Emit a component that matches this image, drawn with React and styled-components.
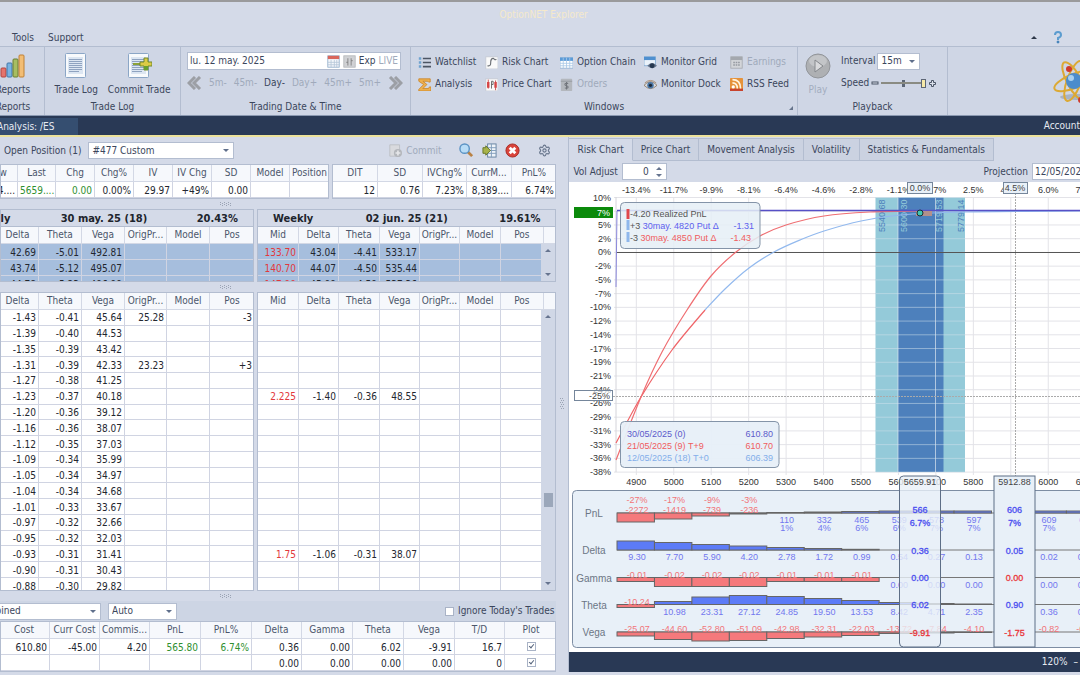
import React from "react";
import styled, { createGlobalStyle } from "styled-components";
import { Settings } from "lucide-react";

const navy = "#293955";
const line = "#b3bdd0";
const ink = "#3b465c";

const openQuotes = {
  widths: [39, 38, 39, 39, 39, 39, 39, 39, 40],
  head: ["Low", "Last", "Chg", "Chg%", "IV", "IV Chg", "SD", "Model", "Position"],
  rows: [["564....", "5659....", "0.00", "0.00%", "29.97", "+49%", "0.00", "", ""]],
  tones: { 1: "green", 2: "green" },
};

const tradeStats = {
  widths: [45, 45, 44, 45, 45],
  head: ["DIT", "SD", "IVChg%", "CurrM...", "PnL%"],
  rows: [["12", "0.76", "7.23%", "8,389....", "6.74%"]],
};

const chainHead = ["Mid", "Delta", "Theta", "Vega", "OrigPr...", "Model", "Pos"];
const mayWidths = [42, 42, 43, 43, 42, 43, 45];
const junWidths = [41, 40, 41, 40, 40, 41, 43];

const mayCalls = [
  ["", "42.69", "-5.01", "492.81", "", "", ""],
  ["", "43.74", "-5.12", "495.07", "", "", ""],
  ["", "44.78", "-5.23", "496.99", "", "", ""],
];
const junCalls = [
  ["133.70", "43.04", "-4.41", "533.17", "", "", ""],
  ["140.70", "44.07", "-4.50", "535.44", "", "", ""],
  ["147.90", "45.09", "-4.59", "537.36", "", "", ""],
];
const mayPuts = [
  ["-1.43", "-0.41", "45.64", "25.28", "-3"],
  ["-1.39", "-0.40", "44.53"],
  ["-1.35", "-0.39", "43.42"],
  ["-1.31", "-0.39", "42.33", "23.23", "+3"],
  ["-1.27", "-0.38", "41.25"],
  ["-1.23", "-0.37", "40.18"],
  ["-1.20", "-0.36", "39.12"],
  ["-1.16", "-0.36", "38.07"],
  ["-1.12", "-0.35", "37.03"],
  ["-1.09", "-0.34", "35.99"],
  ["-1.05", "-0.34", "34.97"],
  ["-1.04", "-0.34", "34.68"],
  ["-1.01", "-0.33", "33.67"],
  ["-0.97", "-0.32", "32.66"],
  ["-0.95", "-0.32", "32.03"],
  ["-0.93", "-0.31", "31.41"],
  ["-0.90", "-0.31", "30.43"],
  ["-0.88", "-0.30", "29.82"],
].map(([d, t, v, orig = "", pos = ""]) => ["", d, t, v, orig, "", pos]);
const junPuts = mayPuts.map((_, i) => {
  if (i === 5) return ["2.225", "-1.40", "-0.36", "48.55", "", "", ""];
  if (i === 15) return ["1.75", "-1.06", "-0.31", "38.07", "", "", ""];
  return ["", "", "", "", "", "", ""];
});

const totals = {
  widths: [51, 50, 50, 51, 51, 50, 51, 51, 51, 50, 53],
  head: ["Cost", "Curr Cost", "Commis...", "PnL", "PnL%", "Delta", "Gamma", "Theta", "Vega", "T/D", "Plot"],
  rows: [
    ["610.80", "-45.00", "4.20", "565.80", "6.74%", "0.36", "0.00", "6.02", "-9.91", "16.7", "check"],
    ["", "", "", "", "", "0.00", "0.00", "0.00", "0.00", "0", "check"],
  ],
  tones: { 3: "green", 4: "green" },
};

/* ---------- icons ---------- */

function Icon({ size = 13, children, label }) {
  return (
    <svg width={size} height={size} viewBox="0 0 16 16" aria-hidden={!label} aria-label={label}>
      {children}
    </svg>
  );
}

const icons = {
  watchlist: (
    <>
      <path d="M1 3h3M1 8h3M1 13h3" stroke="#6fa3cf" strokeWidth="3" />
      <path d="M6 3h10M6 8h10M6 13h10" stroke="#4c5564" strokeWidth="2" />
    </>
  ),
  analysis: (
    <path d="M1 1h14v4h-2l-1-1H6l5 4-5 5h7l1-2h2v5H1v-2l6-6-6-4z" fill="#eeb04f" stroke="#c98426" />
  ),
  risk: (
    <>
      <rect x="1" y="1" width="15" height="15" fill="#fafafa" stroke="#c3c8d2" />
      <path d="M3 12c4 1 4-2 4-4s1-5 3-5 1 3 4 1" fill="none" stroke="#6b6f75" strokeWidth="1.4" />
    </>
  ),
  price: (
    <>
      <rect x="1" y="1" width="15" height="15" fill="#fafafa" stroke="#c3c8d2" />
      <path d="M4 2v11M13 3v12" stroke="#c23434" />
      <path d="M4 5v7M13 5v7" stroke="#d64545" strokeWidth="3" />
      <path d="M8 13V4h2v4H8" fill="none" stroke="#555" />
    </>
  ),
  chain: (
    <>
      <rect x="0" y="2" width="16" height="13" fill="#fff" stroke="#8fb0d2" />
      <rect x="0" y="2" width="16" height="4" fill="#5b9bd8" />
      <path d="M4 2v13M8 2v13M12 2v13M0 9h16M0 12h16" stroke="#a9c8e6" />
    </>
  ),
  orders: (
    <>
      <rect x="1" y="1" width="14" height="15" rx="1" fill="#b3b7bd" />
      <path d="M1 4h14" stroke="#93979e" />
      <path d="M10 7c-1-1-4-1-4 1s4 1 4 3-3 2-4 1M8 5v9" fill="none" stroke="#71757c" strokeWidth="1.3" />
    </>
  ),
  commit: (
    <>
      <path d="M1 1h12v14H1z" fill="#d9dade" stroke="#b9bcc2" />
      <circle cx="11" cy="11" r="5" fill="#b4b7bc" />
      <path d="M11 8v6M8 11h6" stroke="#e6e7ea" strokeWidth="2" />
    </>
  ),
  grid: (
    <>
      <rect x="0" y="1" width="14" height="11" fill="#eaf2fa" stroke="#7fa9d1" />
      <rect x="0" y="1" width="14" height="4" fill="#4f90d0" />
      <path d="M4 12q6-7 12 0-6 6-12 0z" fill="#64748b" />
      <circle cx="10" cy="12" r="3" fill="#26384f" />
    </>
  ),
  dock: (
    <>
      <path d="M0 9q8-9 16 0-8 8-16 0z" fill="#d9dde3" stroke="#8b7358" />
      <circle cx="8" cy="9" r="4" fill="#4a76a5" />
      <circle cx="8" cy="9" r="2" fill="#1d2937" />
      <path d="M1 6q7-6 14 0" fill="none" stroke="#a48462" />
    </>
  ),
  earnings: (
    <>
      <rect x="1" y="1" width="14" height="14" fill="#d3d5d9" stroke="#a4a8ae" />
      <rect x="1" y="1" width="14" height="4" fill="#a4a8ae" />
      <path d="M4 8h8M4 11h8" stroke="#9498a0" strokeWidth="2" strokeDasharray="2 1" />
    </>
  ),
  rss: (
    <>
      <rect x="0" y="0" width="16" height="16" rx="1" fill="#e5923a" />
      <path d="M0 13h16v3H0z" fill="#c8432d" />
      <circle cx="4" cy="11" r="2" fill="#fff" />
      <path d="M3 6q6 0 6 7M3 2q10 0 10 11" fill="none" stroke="#fff3df" strokeWidth="2" />
    </>
  ),
};

const windowItems = [
  ["watchlist", "Watchlist"],
  ["risk", "Risk Chart"],
  ["chain", "Option Chain"],
  ["grid", "Monitor Grid"],
  ["earnings", "Earnings", true],
  ["analysis", "Analysis"],
  ["price", "Price Chart"],
  ["orders", "Orders", true],
  ["dock", "Monitor Dock"],
  ["rss", "RSS Feed"],
];

function BarsIcon() {
  return (
    <svg width="26" height="26" viewBox="0 0 26 26" aria-hidden="true">
      <rect x="1" y="15" width="5" height="9" rx="1" fill="#e4746d" stroke="#b34540" />
      <rect x="7" y="10" width="5" height="14" rx="1" fill="#79b3e2" stroke="#4277a8" />
      <rect x="13" y="6" width="5" height="18" rx="1" fill="#a7bd62" stroke="#697f30" />
      <rect x="19" y="2" width="5" height="22" rx="1" fill="#f2bd74" stroke="#bf8034" />
    </svg>
  );
}

function PageIcon({ plus }) {
  return (
    <svg width="26" height="26" viewBox="0 0 26 26" aria-hidden="true">
      <rect x="2.5" y="0.5" width="20" height="24" rx="1" fill="#f8fafc" stroke="#8ba6c6" />
      <rect x="5" y="4" width="15" height="17" fill="#dce6f2" />
      <path
        d="M6 6.5h13M6 8.5h13M6 10.5h13M6 12.5h13M6 14.5h13M6 16.5h13M6 18.5h10"
        stroke="#8fa3c0"
      />
      {plus && (
        <>
          <path d="M7 11h9" stroke="#8ca238" strokeWidth="2" />
          <path d="M18 5h4v4h4v4h-4v4h-4v-4h-4V9h4z" fill="#dccb45" stroke="#70892c" />
          <path d="M18 13h4v4h-4z" fill="#67a02f" />
        </>
      )}
    </svg>
  );
}

function AtomIcon() {
  return (
    <svg width="44" height="44" viewBox="0 0 44 44" aria-hidden="true">
      <ellipse cx="24" cy="38" rx="16" ry="3" fill="#a9b3c4" />
      <g fill="none" stroke="#dca934" strokeWidth="2">
        <ellipse cx="22" cy="22" rx="7" ry="21" transform="rotate(-28 22 22)" />
        <ellipse cx="22" cy="22" rx="7" ry="21" transform="rotate(20 22 22)" />
        <ellipse cx="22" cy="22" rx="7" ry="21" transform="rotate(68 22 22)" />
      </g>
      <circle cx="22" cy="22" r="8" fill="#4b8ccc" />
      <circle cx="19" cy="19" r="3" fill="#a8d0f0" />
      <circle cx="17" cy="10" r="3" fill="#cf3a2c" />
      <circle cx="29" cy="41" r="3" fill="#cf3a2c" />
    </svg>
  );
}

function Chevrons({ flip }) {
  return (
    <svg width="15" height="14" viewBox="0 0 15 14" aria-hidden="true">
      <path
        d={flip ? "M2 1l6 6-6 6M7 1l6 6-6 6" : "M8 1L2 7l6 6M13 1L7 7l6 6"}
        fill="none"
        stroke="#9c9fa5"
        strokeWidth="3"
      />
    </svg>
  );
}

/* ---------- grids ---------- */

function DataGrid({ widths, head, rows, tones = {}, fill, selected, spacer, label }) {
  return (
    <Table $fill={fill} aria-label={label}>
      <colgroup>
        {widths.map((w, i) => (
          <col key={i} width={w} />
        ))}
        {spacer && <col width="14" />}
      </colgroup>
      <thead>
        <tr>
          {head.map((h, i) => (
            <HeadCell key={i}>{h}</HeadCell>
          ))}
          {spacer && <HeadCell />}
        </tr>
      </thead>
      <tbody>
        {rows.map((row, r) => (
          <tr key={r}>
            {row.map((value, i) => (
              <Cell
                key={i}
                $tone={tones[i]}
                $selected={selected}
                $fill={fill}
                $center={value === "check"}
              >
                {value === "check" ? (
                  <CheckBox type="checkbox" defaultChecked aria-label={`Plot row ${r + 1}`} />
                ) : (
                  value
                )}
              </Cell>
            ))}
            {spacer && <ScrollCell />}
          </tr>
        ))}
      </tbody>
    </Table>
  );
}

function Band({ date, iv }) {
  return (
    <BandRow>
      <span>Weekly</span>
      <span>{date}</span>
      <span>{iv}</span>
    </BandRow>
  );
}

function ScrollBar({ thumb, below }) {
  return (
    <ScrollTrack $below={below}>
      <Arrow $up />
      {thumb && <ScrollThumb />}
      <Arrow />
    </ScrollTrack>
  );
}

function Combo({ width, value, label, offset }) {
  return (
    <ComboBox $width={width} $offset={offset}>
      <select aria-label={label} defaultValue={value}>
        <option>{value}</option>
      </select>
    </ComboBox>
  );
}

function Grip({ vertical }) {
  return (
    <svg width={vertical ? 5 : 13} height={vertical ? 13 : 5} aria-hidden="true">
      {[0, 1, 2, 3, 4, 5].map((i) => (
        <path
          key={i}
          d={vertical ? `M${i % 2} ${i * 2 + 0.5}h4` : `M${i * 2 + 0.5} ${i % 2}v4`}
          stroke="#9aa3b4"
          strokeDasharray="1 1"
        />
      ))}
    </svg>
  );
}

/* ---------- chart ---------- */

const step = 37.45;
const strikeX = (strike) => 636.3 + ((strike - 4900) / 100) * step;
const topPct = ["-13.4%", "-11.7%", "-9.9%", "-8.1%", "-6.4%", "-4.6%", "-2.8%", "-1.1%", "0.7%", "2.5%", "4.2%", "6.0%", "7.8%"];
const leftPct = ["10%", "7%", "5%", "2%", "0%", "-2%", "-5%", "-7%", "-10%", "-12%", "-14%", "-17%", "-19%", "-21%", "-24%", "-26%", "-29%", "-31%", "-33%", "-36%", "-38%"];
const gridY = (i) => 197.5 + i * 13.73;

function smooth(pts) {
  return pts.reduce((d, [x, y], i) => {
    if (i === 0) return `M${x} ${y}`;
    const p0 = pts[Math.max(i - 2, 0)];
    const p1 = pts[i - 1];
    const p3 = pts[Math.min(i + 1, pts.length - 1)];
    return `${d}C${p1[0] + (x - p0[0]) / 6} ${p1[1] + (y - p0[1]) / 6} ${x - (p3[0] - p1[0]) / 6} ${y - (p3[1] - p1[1]) / 6} ${x} ${y}`;
  }, "");
}

const t9 = [[616, 460], [641, 397], [662, 352], [687, 310], [711, 276], [736, 252], [760, 236], [786, 225], [824, 216], [870, 212], [920, 211]];
const t0low = [[616, 443], [641, 397], [672, 350], [705, 310]];
const t0 = [[705, 310], [725, 289], [749, 268], [774, 252], [800, 240], [824, 231], [861, 221], [900, 215], [960, 212], [1080, 211]];

const greeks = [
  {
    name: "PnL",
    base: 513,
    values: ["-2272", "-1419", "-739", "-236", "110", "332", "465", "539", "578", "597", "606", "609", "611"],
    pct: ["-27%", "-17%", "-9%", "-3%", "1%", "4%", "6%", "6%", "7%", "7%", "7%", "7%", "7%"],
    bars: [-9, -6, -3, -1, 0.5, 1, 1.5, 2, 2, 2, 2, 2, 2],
  },
  {
    name: "Delta",
    base: 550,
    values: ["9.30", "7.70", "5.90", "4.20", "2.78", "1.72", "0.99", "0.54", "0.27", "0.13", "0.05", "0.02", "0.01"],
    bars: [9, 7.5, 5.5, 4, 2.5, 1.5, 0.7, 0, 0, 0, 0, 0, 0],
  },
  {
    name: "Gamma",
    base: 577.5,
    values: ["-0.01", "-0.02", "-0.02", "-0.02", "-0.01", "-0.01", "-0.01", "0.00", "0.00", "0.00", "0.00", "0.00", "0.00"],
    bars: [-4, -9, -9, -9, -4, -4, -4, 0, 0, 0, 0, 0, 0],
  },
  {
    name: "Theta",
    base: 604.5,
    values: ["-10.24", "10.98", "23.31", "27.12", "24.85", "19.50", "13.53", "8.42", "4.71", "2.35", "0.90", "0.36", "0.10"],
    bars: [-3, 3, 7.5, 9, 8, 6, 4, 2, 1, 0.5, 0, 0, 0],
  },
  {
    name: "Vega",
    base: 632,
    values: ["-25.07", "-44.60", "-52.80", "-51.09", "-42.98", "-32.31", "-22.03", "-13.72", "-7.84", "-4.10", "-1.90", "-0.82", "-0.30"],
    bars: [-4, -7.5, -9, -8.5, -6.5, -5, -3.5, -1.5, -1, -0.5, 0, 0, 0],
  },
];

function GreekRow({ name, base, values, pct, bars }) {
  return (
    <g>
      <text x="594" y={base + 4} fill="#6c7685" fontSize="10" textAnchor="middle">
        {name}
      </text>
      <path d={`M617 ${base}H1080`} stroke="#777" />
      {bars.map((h, i) => {
        const x = 617 + i * step;
        const mid = 637 + i * step;
        const neg = values[i].startsWith("-");
        // the 5900 column lies under the fixed marker
        if (i === 10) return null;
        return (
          <g key={i}>
            {h !== 0 && (
              <rect
                x={x}
                y={h > 0 ? base - h : base}
                width={step}
                height={Math.abs(h)}
                fill={neg ? "#f5797c" : "#5c7bf7"}
                stroke="#666"
              />
            )}
            <text x={mid} y={neg ? base : base + 10} fill={neg ? "#f27478" : "#7277ef"} textAnchor="middle">
              {values[i]}
            </text>
            {pct && (
              <text x={mid} y={neg ? base - 10 : base + 18} fill={neg ? "#f27478" : "#7277ef"} textAnchor="middle">
                {pct[i]}
              </text>
            )}
          </g>
        );
      })}
    </g>
  );
}

function Marker({ x, strike, values, solid }) {
  const ys = [513, 526, 554, 581, 608, 636];
  return (
    <g>
      <rect
        x={x - 20.5}
        y="476"
        width="41"
        height="171"
        rx={solid ? 0 : 4}
        fill={solid ? "#e8f0f8" : "rgba(232,240,248,.8)"}
        stroke="#5d6e86"
      />
      <text x={x} y="485" fill="#444" textAnchor="middle">
        {strike}
      </text>
      {values.map(([v, c], i) => (
        <text key={i} x={x} y={ys[i]} fill={c || "#4a4ef0"} stroke={c || "#4a4ef0"} strokeWidth=".3" textAnchor="middle">
          {v}
        </text>
      ))}
    </g>
  );
}

function RiskChart() {
  return (
    <Chart viewBox="569 182 511 470" preserveAspectRatio="xMinYMin slice" role="img" aria-label="Risk Chart">
      <rect x="569" y="182" width="511" height="470" fill="#fff" />
      {leftPct.map((p, i) => (
        <g key={p}>
          <path d={`M614 ${gridY(i)}H1080`} stroke="#e3e3e8" />
          {i !== 1 && (
            <text x="611" y={gridY(i) + 3} fill="#333" textAnchor="end">
              {p}
            </text>
          )}
        </g>
      ))}
      {topPct.map((p, i) => (
        <g key={p}>
          <path d={`M${strikeX(4900 + i * 100)} 197V475`} stroke="#e3e3e8" />
          <text x={strikeX(4900 + i * 100)} y="193" fill="#333" textAnchor="middle">
            {p}
          </text>
          {i !== 10 && (
            <text x={strikeX(4900 + i * 100)} y="485" fill="#333" textAnchor="middle">
              {4900 + i * 100}
            </text>
          )}
        </g>
      ))}
      <path d="M616 197V472" stroke="#d4d4da" />
      <rect x="875.5" y="197.5" width="89.5" height="274.5" fill="#94cad9" />
      <rect x="898" y="197.5" width="45.5" height="274.5" fill="#4d80bc" />
      {leftPct.map((p, i) => (
        <path key={p} d={`M876 ${gridY(i)}h89`} stroke="#d5e4ee" strokeOpacity=".5" />
      ))}
      <path d="M898 198V472M935.5 198V472" stroke="#dbe6f0" strokeOpacity=".7" />
      {[[885, "5540.68"], [907, "5600.30"], [942, "5719.53"], [964, "5779.14"]].map(([x, v], i) => (
        <text key={v} transform={`translate(${x} 232) rotate(-90)`} fill={i === 0 || i === 3 ? "#4d80bc" : "#94cad9"}>
          {v}
        </text>
      ))}
      <path d="M616 252.5H1080" stroke="#555" />
      <path d="M613 396.5H1080M1015.5 193V476" stroke="#aaa" strokeDasharray="2 1" />
      <g fill="none" strokeWidth="1.2">
        <path d={smooth(t0)} stroke="#92b9ee" />
        <path d={smooth(t0low)} stroke="#ef6468" />
        <path d={smooth(t9)} stroke="#ef6e72" />
      </g>
      <path d="M616 287L617 211" stroke="#8b88dc" />
      <path d="M617 210.5H1080" stroke="#5750c6" strokeWidth="1.4" />
      <rect x="916" y="211" width="16" height="5" fill="#b3908b" />
      <circle cx="920" cy="213" r="3" fill="#3fc5b1" stroke="#1d2b36" />

      <rect x="574" y="207" width="39" height="11" fill="#0b8a0b" />
      <text x="610" y="216" fill="#fff" textAnchor="end">
        7%
      </text>
      <rect x="574.5" y="390.5" width="38" height="10" fill="rgba(255,255,255,.6)" stroke="#75869b" />
      <text x="610" y="399" fill="#444" textAnchor="end">
        -25%
      </text>
      <rect x="907.5" y="182.5" width="25" height="11" fill="#e8f0f8" stroke="#75869b" />
      <text x="920" y="191" fill="#444" textAnchor="middle">
        0.0%
      </text>
      <rect x="1003.5" y="182.5" width="24" height="11" fill="#e8f0f8" stroke="#75869b" />
      <text x="1015" y="191" fill="#444" textAnchor="middle">
        4.5%
      </text>

      <rect x="620.5" y="202.5" width="139.5" height="46" rx="4" fill="rgba(229,238,246,.85)" stroke="#8494a8" />
      <path d="M628 209v10" stroke="#e0474b" strokeWidth="3" />
      <path d="M628 220v10M628 232v10" stroke="#8fb7ec" strokeWidth="3" />
      <text x="630" y="217" fill="#555">-4.20 Realized PnL</text>
      <text x="630" y="229" fill="#555">
        +3 <tspan fill="#5d60ee">30may. 4820 Put Δ</tspan>
      </text>
      <text x="754" y="229" fill="#5d60ee" textAnchor="end">-1.31</text>
      <text x="630" y="241" fill="#555">
        -3 <tspan fill="#f05c60">30may. 4850 Put Δ</tspan>
      </text>
      <text x="751" y="241" fill="#f05c60" textAnchor="end">-1.43</text>

      <rect x="620.5" y="421.5" width="158.5" height="46" rx="4" fill="rgba(231,239,248,.95)" stroke="#8494a8" />
      {[
        ["30/05/2025 (0)", "610.80", "#5d5bcb"],
        ["21/05/2025 (9) T+9", "610.70", "#f05c60"],
        ["12/05/2025 (18) T+0", "606.39", "#83aeea"],
      ].map(([label, value, color], i) => (
        <g key={label} fill={color}>
          <text x="627" y={437 + i * 12}>{label}</text>
          <text x="773" y={437 + i * 12} textAnchor="end">{value}</text>
        </g>
      ))}

      <rect x="572.5" y="490.5" width="520" height="157" rx="4" fill="#e8f0f8" stroke="#7d8da3" />
      {greeks.map((g) => (
        <GreekRow key={g.name} {...g} />
      ))}
      <Marker x={920} strike="5659.91" values={[["566"], ["6.7%"], ["0.36"], ["0.00"], ["6.02"], ["-9.91", "#e8363a"]]} />
      <Marker
        x={1014.5}
        strike="5912.88"
        solid
        values={[["606"], ["7%"], ["0.05"], ["0.00", "#e8363a"], ["0.90"], ["-1.75", "#e8363a"]]}
      />
    </Chart>
  );
}

/* ---------- page ---------- */

export default function App() {
  return (
    <>
      <GlobalStyle />
      <Shell>
        <TitleBar>OptionNET Explorer</TitleBar>
        <MenuBar>
          <MenuButton>Tools</MenuButton>
          <MenuButton>Support</MenuButton>
          <MenuEnd>
            <Arrow $up $dark />
            <HelpButton aria-label="Help">
              <svg width="10" height="13" viewBox="0 0 10 13" aria-hidden="true">
                <path d="M2 4q0-3 3-3t3 3q0 2-3 3v2" fill="none" stroke="#5b9ccf" strokeWidth="2" />
                <circle cx="5" cy="11" r="1" fill="#3f80b8" stroke="#3f80b8" />
              </svg>
            </HelpButton>
          </MenuEnd>
        </MenuBar>

        <Ribbon>
          <Group $width={63} $cut>
            <GroupBody>
              <BigButton>
                <BarsIcon />
                Reports
              </BigButton>
            </GroupBody>
            <GroupName>Reports</GroupName>
          </Group>
          <Group $width={136}>
            <GroupBody>
              <BigButton>
                <PageIcon />
                Trade Log
              </BigButton>
              <BigButton>
                <PageIcon plus />
                Commit Trade
              </BigButton>
            </GroupBody>
            <GroupName>Trade Log</GroupName>
          </Group>
          <Group $width={230}>
            <Stack>
              <DateBox>
                <input aria-label="Trading date" defaultValue="lu. 12 may. 2025" />
                <Icon label="Calendar">
                  <rect x="1" y="1" width="14" height="14" fill="#f4f7fb" stroke="#8ea9c8" />
                  <rect x="1" y="1" width="14" height="4" fill="#d9665c" />
                  <path d="M5 6v9M9 6v9M12 6v9M1 9h14M1 12h14" stroke="#b4c5d8" />
                </Icon>
                <Icon>
                  <rect x="1" y="1" width="14" height="14" fill="#d0d1d4" stroke="#b2b4b8" />
                  <path d="M6 4v9M10 4v9M4 9h2M10 7h2" stroke="#777" />
                </Icon>
                <TextButton>Exp</TextButton>
                <TextButton disabled>LIVE</TextButton>
              </DateBox>
              <StepRow>
                <TextButton aria-label="Back"><Chevrons /></TextButton>
                <TextButton disabled>5m-</TextButton>
                <TextButton disabled>45m-</TextButton>
                <TextButton>Day-</TextButton>
                <TextButton disabled>Day+</TextButton>
                <TextButton disabled>45m+</TextButton>
                <TextButton disabled>5m+</TextButton>
                <TextButton aria-label="Forward"><Chevrons flip /></TextButton>
              </StepRow>
            </Stack>
            <GroupName>Trading Date &amp; Time</GroupName>
          </Group>
          <Group $width={387}>
            <WindowGrid>
              {windowItems.map(([icon, text, off]) => (
                <TextButton key={text} disabled={off}>
                  <Icon>{icons[icon]}</Icon>
                  {text}
                </TextButton>
              ))}
            </WindowGrid>
            <GroupName>
              Windows
              <Corner />
            </GroupName>
          </Group>
          <Group $width={150}>
            <PlayBody>
              <BigButton disabled>
                <svg width="26" height="26" viewBox="0 0 26 26" aria-hidden="true">
                  <circle cx="13" cy="13" r="12" fill="#aeb0b3" stroke="#92959a" />
                  <ellipse cx="13" cy="8" rx="9" ry="6" fill="#c3c5c8" />
                  <path d="M10 7l8 6-8 6z" fill="#d9dadc" stroke="#85888c" />
                </svg>
                Play
              </BigButton>
              <Stack>
                <Field>
                  Interval
                  <Combo width={43} value="15m" label="Interval" />
                </Field>
                <Field>
                  <label htmlFor="speed">Speed</label>
                  <SpeedBox>
                    <svg width="8" height="4" aria-hidden="true">
                      <rect x="1" y="1" width="6" height="2" fill="#dce2ec" stroke="#4b5566" />
                    </svg>
                    <Speed id="speed" type="range" defaultValue="100" />
                    <svg width="9" height="9" viewBox="0 0 9 9" aria-hidden="true">
                      <path d="M3.5 1.5h2v2h2v2h-2v2h-2v-2h-2v-2h2z" fill="#dce2ec" stroke="#4b5566" />
                    </svg>
                  </SpeedBox>
                </Field>
              </Stack>
            </PlayBody>
            <GroupName>Playback</GroupName>
          </Group>
          <Logo>
            <AtomIcon />
          </Logo>
        </Ribbon>

        <DocBar>
          <DocTab>Analysis: /ES</DocTab>
          <Account>Account</Account>
        </DocBar>

        <Workspace>
          <LeftPane>
            <PositionBar>
              Open Position (1)
              <Combo width={146} value="#477 Custom" label="Open Position" />
              <ToolSet>
                <TextButton disabled>
                  <Icon>{icons.commit}</Icon>
                  Commit
                </TextButton>
                <TextButton aria-label="Search">
                  <Icon size={15}>
                    <path d="M9 9l5 5" stroke="#b98245" strokeWidth="3" />
                    <circle cx="6" cy="6" r="5" fill="#b8dcf6" stroke="#5b93c4" strokeWidth="1.5" />
                  </Icon>
                </TextButton>
                <TextButton aria-label="Columns">
                  <Icon size={15}>
                    <rect x="6" y="1" width="9" height="14" fill="#eef3f9" stroke="#64809f" />
                    <path d="M6 5h9M6 8h9M6 11h9M10 1v14" stroke="#7f9cbb" />
                    <path d="M1 5h3V3l5 5-5 5v-2H1z" fill="#a8b34a" stroke="#667528" />
                  </Icon>
                </TextButton>
                <TextButton aria-label="Close position">
                  <Icon size={15}>
                    <circle cx="8" cy="8" r="7" fill="#d9443b" stroke="#a82b25" />
                    <path d="M5 5l6 6M11 5l-6 6" stroke="#fff" strokeWidth="3" />
                  </Icon>
                </TextButton>
                <TextButton aria-label="Settings">
                  <Settings size={13} color="#66748b" />
                </TextButton>
              </ToolSet>
            </PositionBar>

            <SummaryRow>
              <Frame $grow={329}>
                <Shift $cut={22}>
                  <DataGrid {...openQuotes} label="Quote" />
                </Shift>
              </Frame>
              <Frame $grow={224}>
                <DataGrid {...tradeStats} label="Trade statistics" />
              </Frame>
            </SummaryRow>
            <Splitter><Grip /></Splitter>

            <ChainRow $height={73}>
              <Frame $grow={254}>
                <Shift $cut={46}>
                  <Band date="30 may. 25 (18)" iv="20.43%" />
                  <DataGrid widths={mayWidths} head={chainHead} rows={mayCalls} selected label="30 may. 25 calls" />
                </Shift>
              </Frame>
              <Frame $grow={300}>
                <Band date="02 jun. 25 (21)" iv="19.61%" />
                <DataGrid widths={junWidths} head={chainHead} rows={junCalls} tones={{ 0: "red" }} selected spacer label="02 jun. 25 calls" />
                <ScrollBar below />
              </Frame>
            </ChainRow>
            <Splitter><Grip /></Splitter>

            <ChainRow>
              <Frame $grow={254}>
                <Shift $cut={46}>
                  <DataGrid widths={mayWidths} head={chainHead} rows={mayPuts} fill label="30 may. 25 puts" />
                </Shift>
              </Frame>
              <Frame $grow={300}>
                <DataGrid widths={junWidths} head={chainHead} rows={junPuts} tones={{ 0: "red" }} fill spacer label="02 jun. 25 puts" />
                <ScrollBar thumb />
              </Frame>
            </ChainRow>
            <Splitter><Grip /></Splitter>

            <FilterBar>
              <Combo width={130} offset={-29} value="Combined" label="View" />
              <Combo width={69} value="Auto" label="Mode" />
              <IgnoreLabel>
                <CheckBox type="checkbox" />
                Ignore Today's Trades
              </IgnoreLabel>
            </FilterBar>
            <Frame>
              <Shift $cut={2}>
                <DataGrid {...totals} label="Totals" />
              </Shift>
            </Frame>
          </LeftPane>

          <Gutter><Grip vertical /></Gutter>

          <RightPane>
            <Tabs>
              <Tab $active>Risk Chart</Tab>
              <Tab>Price Chart</Tab>
              <Tab>Movement Analysis</Tab>
              <Tab>Volatility</Tab>
              <Tab>Statistics &amp; Fundamentals</Tab>
            </Tabs>
            <ChartBar>
              <label htmlFor="vol">Vol Adjust</label>
              <SpinBox>
                <input id="vol" defaultValue="0" />
                <Spin>
                  <Arrow $up />
                  <Arrow />
                </Spin>
              </SpinBox>
              <Projection>
                <label htmlFor="projection">Projection</label>
                <input id="projection" defaultValue="12/05/2025" />
              </Projection>
            </ChartBar>
            <RiskChart />
            <StatusBar>
              <span>120%</span>
              <span>–</span>
            </StatusBar>
          </RightPane>
        </Workspace>
      </Shell>
    </>
  );
}

const GlobalStyle = createGlobalStyle`
  *, *::before, *::after {
    box-sizing: border-box;
  }
  body {
    margin: 0;
    overflow: hidden;
    background: #d4dae8;
    color: ${ink};
    font-family: "DejaVu Sans Condensed", "Noto Sans", sans-serif;
    font-size: 10px;
    line-height: 14px;
  }
  button, input, select {
    font: inherit;
    color: inherit;
    margin: 0;
    padding: 0;
    border: 0;
    background: none;
    outline: none;
  }
  svg {
    display: block;
    flex: none;
  }
`;
const Shell = styled.div`
  display: flex;
  flex-direction: column;
  height: 100vh;
  border-top: 2px solid #9a9a9c;
`;
const TitleBar = styled.header`
  height: 27px;
  line-height: 25px;
  padding-left: 7px;
  text-align: center;
  color: #f5e9cb;
`;
const MenuBar = styled.nav`
  display: flex;
  align-items: center;
  gap: 14px;
  height: 17px;
  padding: 0 17px 0 12px;
`;
const MenuButton = styled.button`
  white-space: nowrap;
`;
const MenuEnd = styled.div`
  display: flex;
  align-items: center;
  gap: 16px;
  margin-left: auto;
`;
const HelpButton = styled.button`
  display: flex;
`;
const Ribbon = styled.div`
  display: flex;
  flex: none;
  height: 70px;
  overflow: hidden;
  background: #cfd6e5;
  border-top: 1px solid ${line};
  border-bottom: 1px solid #8a98b0;
`;
const Group = styled.section`
  display: flex;
  flex-direction: column;
  flex: none;
  width: ${({ $width }) => $width}px;
  margin-left: ${({ $cut }) => ($cut ? "-18px" : "0")};
  border-right: 1px solid ${line};
`;
const GroupBody = styled.div`
  display: flex;
  flex: 1;
  justify-content: center;
  gap: 10px;
  padding-top: 6px;
`;
const GroupName = styled.div`
  position: relative;
  height: 15px;
  text-align: center;
`;
const Corner = styled.i`
  position: absolute;
  right: 4px;
  bottom: 5px;
  border: 2px solid #66748c;
  border-top-color: transparent;
  border-left-color: transparent;
`;
const BigButton = styled.button`
  display: flex;
  flex-direction: column;
  align-items: center;
  align-self: flex-start;
  gap: 4px;
  line-height: 13px;
  white-space: nowrap;
  color: ${({ disabled }) => (disabled ? "#a3adbf" : ink)};
`;
const TextButton = styled.button`
  display: flex;
  align-items: center;
  gap: 4px;
  white-space: nowrap;
  color: ${({ disabled }) => (disabled ? "#a0aabb" : ink)};
`;
const Stack = styled.div`
  display: flex;
  flex-direction: column;
  flex: 1;
  gap: 4px;
  padding: 5px 9px 0 6px;
`;
const DateBox = styled.div`
  display: flex;
  align-items: center;
  gap: 3px;
  height: 18px;
  padding: 0 2px;
  background: #fff;
  border: 1px solid ${line};

  input {
    flex: 1;
    min-width: 0;
  }
`;
const StepRow = styled.div`
  display: flex;
  justify-content: space-between;
  align-items: center;
  height: 18px;
  margin-right: -2px;
`;
const WindowGrid = styled.div`
  display: grid;
  grid-template-columns: 67px 75px 84px 86px 1fr;
  grid-auto-rows: 22px;
  flex: 1;
  padding: 4px 0 0 7px;
`;
const PlayBody = styled.div`
  display: flex;
  flex: 1;
  padding-left: 7px;

  > ${BigButton} {
    margin-top: 6px;
  }
`;
const Field = styled.div`
  display: flex;
  align-items: center;
  gap: 2px;
  height: 18px;
  padding-left: 4px;
`;
const ComboBox = styled.div`
  position: relative;
  flex: none;
  width: ${({ $width }) => $width}px;
  height: 17px;
  margin-left: ${({ $offset }) => $offset || 0}px;
  background: #fff;
  border: 1px solid ${line};

  select {
    appearance: none;
    display: block;
    width: 100%;
    height: 100%;
    padding: 0 14px 0 3px;
  }
  &::after {
    content: "";
    position: absolute;
    right: 4px;
    top: 6px;
    border: 3px solid transparent;
    border-top-color: #5f6f8b;
    border-bottom: 0;
  }
`;
const SpeedBox = styled.div`
  display: flex;
  align-items: center;
  gap: 2px;
`;
const Speed = styled.input`
  appearance: none;
  width: 45px;
  height: 10px;
  background: linear-gradient(#8a8b82, #8a8b82) center / 100% 2px no-repeat,
    linear-gradient(#5d6675, #5d6675) center / 3px 7px no-repeat;

  &::-webkit-slider-thumb {
    appearance: none;
    width: 5px;
    height: 9px;
    background: #f6e9a8;
    border: 1px solid #5d6675;
  }
`;
const Logo = styled.div`
  display: flex;
  flex: 1;
  justify-content: flex-end;
  align-items: center;
  margin-right: -16px;
`;
const DocBar = styled.div`
  display: flex;
  align-items: flex-end;
  flex: none;
  height: 21px;
  background: ${navy};
  color: #e6eaf2;
  border-bottom: 2px solid #ece29b;
`;
const DocTab = styled.button`
  height: 17px;
  margin-left: -5px;
  padding: 0 24px 0 2px;
  white-space: nowrap;
  background: #354e70;
`;
const Account = styled.span`
  margin-left: auto;
  line-height: 18px;
`;
const Workspace = styled.main`
  display: flex;
  flex: 1;
  min-height: 0;
  padding-bottom: 3px;
`;
const LeftPane = styled.div`
  display: flex;
  flex-direction: column;
  flex: 557;
  min-width: 0;
`;
const Gutter = styled.div`
  display: flex;
  align-items: center;
  justify-content: center;
  flex: 12;
`;
const RightPane = styled.div`
  display: flex;
  flex-direction: column;
  flex: 511;
  min-width: 0;
  border-left: 1px solid ${line};
`;
const PositionBar = styled.div`
  display: flex;
  align-items: center;
  flex: none;
  gap: 7px;
  height: 27px;
  padding: 0 5px 0 4px;
  white-space: nowrap;
`;
const ToolSet = styled.div`
  display: flex;
  align-items: center;
  gap: 8px;
  margin-left: auto;

  > :first-child {
    margin-right: 10px;
  }
  > :last-child {
    margin-left: 10px;
  }
`;
const SummaryRow = styled.div`
  display: flex;
  flex: none;
  gap: 3px;
`;
const ChainRow = styled.div`
  display: flex;
  flex: ${({ $height }) => ($height ? "none" : 1)};
  height: ${({ $height }) => ($height ? `${$height}px` : "auto")};
  min-height: 0;
  gap: 3px;
`;
const Frame = styled.div`
  position: relative;
  flex: ${({ $grow }) => ($grow ? `${$grow} 1 0` : "none")};
  min-width: 0;
  overflow: hidden;
  border: 1px solid ${line};
`;
const Shift = styled.div`
  height: 100%;
  margin-left: ${({ $cut }) => -$cut}px;
`;
const Splitter = styled.div`
  display: flex;
  align-items: center;
  flex: none;
  height: 10px;
  padding-left: 220px;
`;
const BandRow = styled.div`
  display: grid;
  grid-template-columns: 1fr auto 1fr;
  height: 17px;
  padding: 0 15px;
  line-height: 17px;
  font-weight: bold;
  font-size: 11px;
  color: #20242c;
  border-bottom: 1px solid ${line};

  > :last-child {
    text-align: right;
  }
`;
const Table = styled.table`
  width: 100%;
  height: ${({ $fill }) => ($fill ? "calc(100% + 4px)" : "auto")};
  table-layout: fixed;
  border-spacing: 0;
`;
const HeadCell = styled.th`
  height: 17px;
  padding: 0;
  overflow: hidden;
  white-space: nowrap;
  font-weight: normal;
  color: #4b566b;
  background: #f6f8fc;
  border: solid #d3d8e5;
  border-width: 0 1px 1px 0;
`;
const tones = { red: "#e2383c", green: "#2f8f2f" };
const Cell = styled.td`
  height: ${({ $fill }) => ($fill ? "15px" : "16px")};
  padding: 2px 2px 0;
  overflow: hidden;
  white-space: nowrap;
  line-height: 12px;
  text-align: ${({ $center }) => ($center ? "center" : "right")};
  color: ${({ $tone }) => tones[$tone] || "#23272f"};
  background: ${({ $selected }) => ($selected ? "#a6bedd" : "#fff")};
  border: solid #d0d4e2;
  border-width: 0 1px 1px 0;
`;
const ScrollCell = styled.td`
  padding: 0;
  background: #d0d7e6;
`;
const ScrollTrack = styled.div`
  position: absolute;
  right: 0;
  bottom: 0;
  top: ${({ $below }) => ($below ? "34px" : "17px")};
  display: flex;
  flex-direction: column;
  justify-content: space-between;
  align-items: center;
  width: 14px;
  padding: 5px 0;
  background: #d0d7e6;
`;
const ScrollThumb = styled.div`
  width: 9px;
  height: 14px;
  margin: auto 0 75px;
  background: #9ba7ba;
`;
const Arrow = styled.i`
  border: 3px solid transparent;
  border-top: ${({ $up }) => ($up ? "0" : "3px solid #66748f")};
  border-bottom: ${({ $up, $dark }) => ($up ? `3px solid ${$dark ? "#2d3749" : "#66748f"}` : "0")};
`;
const CheckBox = styled.input`
  appearance: none;
  display: inline-block;
  width: 9px;
  height: 9px;
  background: #fff;
  border: 1px solid #a9b3c6;
  position: relative;
  vertical-align: top;

  &:checked::after {
    content: "";
    position: absolute;
    left: 2px;
    top: 0;
    width: 3px;
    height: 5px;
    border: solid #56647c;
    border-width: 0 1px 1px 0;
    transform: rotate(40deg);
  }
`;
const FilterBar = styled.div`
  display: flex;
  align-items: center;
  flex: none;
  gap: 7px;
  height: 20px;
  background: #cdd5e4;
`;
const IgnoreLabel = styled.label`
  display: flex;
  align-items: center;
  gap: 4px;
  margin-left: auto;
  padding-right: 2px;
`;
const Tabs = styled.div`
  display: flex;
  flex: none;
  height: 24px;
  padding-top: 1px;
`;
const Tab = styled.button`
  padding: 0 8px;
  white-space: nowrap;
  background: ${({ $active }) => ($active ? "#d4dae8" : "#cbd2e1")};
  border: solid ${line};
  border-width: 1px 1px 1px 0;
  border-bottom-color: ${({ $active }) => ($active ? "#d4dae8" : line)};
`;
const ChartBar = styled.div`
  display: flex;
  align-items: center;
  flex: none;
  gap: 4px;
  height: 21px;
  padding-left: 4px;
`;
const SpinBox = styled.div`
  display: flex;
  width: 45px;
  height: 17px;
  padding-right: 4px;
  background: #fff;
  border: 1px solid ${line};

  input {
    flex: 1;
    min-width: 0;
    padding-right: 7px;
    text-align: right;
  }
`;
const Spin = styled.span`
  display: flex;
  flex-direction: column;
  justify-content: space-between;
  padding: 3px 0 2px;
`;
const Projection = styled.div`
  display: flex;
  align-items: center;
  gap: 4px;
  margin-left: auto;
  margin-right: -14px;

  input {
    width: 62px;
    height: 17px;
    padding-left: 2px;
    background: #fff;
    border: 1px solid ${line};
  }
`;
const Chart = styled.svg`
  flex: 1;
  width: 100%;
  min-height: 0;
  font-family: "Liberation Sans", sans-serif;
  font-size: 9px;
`;
const StatusBar = styled.footer`
  display: flex;
  align-items: center;
  justify-content: flex-end;
  flex: none;
  gap: 6px;
  height: 20px;
  padding-right: 2px;
  background: ${navy};
  color: #e6eaf2;
`;
